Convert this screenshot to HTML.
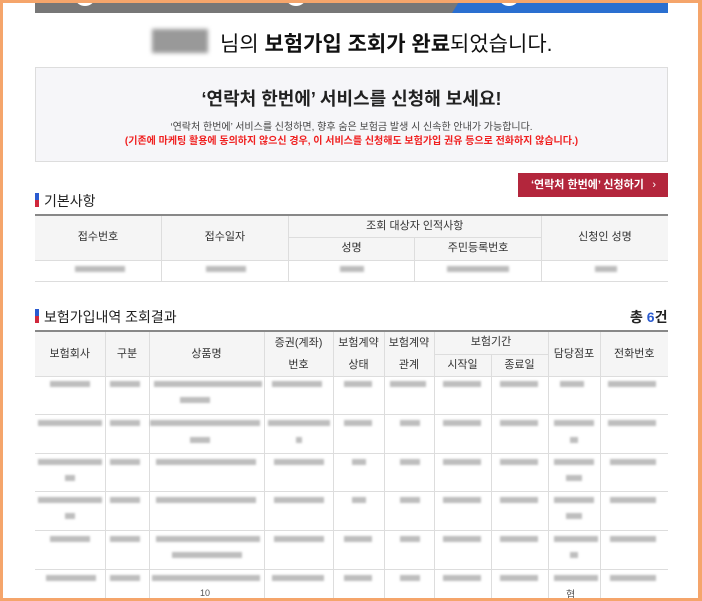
<!DOCTYPE html>
<html style="height:601px;overflow:hidden"><head><meta charset="utf-8"><style>
*{box-sizing:border-box;margin:0;padding:0}
body{width:702px;height:601px;overflow:hidden;background:#fff;font-family:"Liberation Sans","Noto Sans CJK KR",sans-serif;color:#222;position:relative}
.frame{position:absolute;left:0;top:0;width:702px;height:601px;border:3px solid #f5a56b;border-right-width:4px;z-index:10;pointer-events:none}
.abs{position:absolute}
.blur{position:absolute;background:#bbb;filter:blur(1.2px);height:6px}
table{border-collapse:collapse;position:absolute;left:35px;width:633px;table-layout:fixed}
td,th{font-weight:normal;font-size:11px;color:#333;text-align:center;border:1px solid #ddd;border-top:none;padding:0;line-height:13px}
th{background:#f5f5f5}
tr td:first-child,tr th:first-child{border-left:none}
tr td:last-child,tr th:last-child{border-right:none}
.tb{border-top:2px solid #888}
.bar{width:4px;height:14px;background:linear-gradient(#2a5bd0 50%,#d0283c 50%);display:inline-block;margin-right:5px;vertical-align:-1px}
</style></head><body>
<div class="frame"></div>
<div class="abs" style="left:35px;top:0;width:633px;height:13px;background:#777"></div>
<div class="abs" style="left:452px;top:0;width:216px;height:13px;background:#2a6fd0;clip-path:polygon(8px 0,100% 0,100% 100%,0 100%)"></div>
<div class="abs" style="left:76px;top:-8px;width:18px;height:14px;border-radius:50%;background:#fff"></div>
<div class="abs" style="left:287px;top:-8px;width:18px;height:14px;border-radius:50%;background:#fff"></div>
<div class="abs" style="left:500px;top:-8px;width:18px;height:14px;border-radius:50%;background:#fff"></div>
<div class="abs" style="left:152px;top:29px;width:56px;height:24px;background:#999;filter:blur(2px)"></div>
<div class="abs" style="left:220px;top:28px;font-size:21px;color:#111;white-space:nowrap">님의 <b>보험가입 조회가 완료</b>되었습니다.</div>
<div class="abs" style="left:35px;top:67px;width:633px;height:95px;background:#f6f6f9;border:1px solid #ddd"></div>
<div class="abs" style="left:35px;top:85px;width:633px;text-align:center;font-size:18px;font-weight:bold;color:#222">‘연락처 한번에’ 서비스를 신청해 보세요!</div>
<div class="abs" style="left:35px;top:118px;width:633px;text-align:center;font-size:10px;color:#444">‘연락처 한번에’ 서비스를 신청하면, 향후 숨은 보험금 발생 시 신속한 안내가 가능합니다.</div>
<div class="abs" style="left:35px;top:132px;width:633px;text-align:center;font-size:10px;color:#f02020;font-weight:bold">(기존에 마케팅 활용에 동의하지 않으신 경우, 이 서비스를 신청해도 보험가입 권유 등으로 전화하지 않습니다.)</div>
<div class="abs" style="left:518px;top:173px;width:150px;height:24px;background:#b3263c;color:#fff;font-size:11px;font-weight:bold;line-height:24px;padding-left:13px">‘연락처 한번에’ 신청하기<span style="position:absolute;right:12px;font-weight:normal">›</span></div>
<div class="abs" style="left:35px;top:191px;font-size:14px;color:#222"><span class="bar"></span>기본사항</div>
<table style="top:214px" class="tb">
<tr style="height:22px"><th rowspan="2">접수번호</th><th rowspan="2">접수일자</th><th colspan="2">조회 대상자 인적사항</th><th rowspan="2">신청인 성명</th></tr>
<tr style="height:23px"><th>성명</th><th>주민등록번호</th></tr>
<tr style="height:21px"><td></td><td></td><td></td><td></td><td></td></tr>
</table>
<div class="blur" style="left:75px;top:266px;width:50px"></div>
<div class="blur" style="left:206px;top:266px;width:40px"></div>
<div class="blur" style="left:340px;top:266px;width:24px"></div>
<div class="blur" style="left:447px;top:266px;width:62px"></div>
<div class="blur" style="left:595px;top:266px;width:22px"></div>
<div class="abs" style="left:35px;top:307px;font-size:14px;color:#222"><span class="bar"></span>보험가입내역 조회결과</div>
<div class="abs" style="left:630px;top:307px;font-size:14px;color:#222;font-weight:bold">총 <span style="color:#2a5bd0">6</span>건</div>
<table style="top:330px" class="tb">
<colgroup><col style="width:70px"><col style="width:44px"><col style="width:115px"><col style="width:69px"><col style="width:51px"><col style="width:50px"><col style="width:57px"><col style="width:57px"><col style="width:52px"><col style="width:68px"></colgroup>
<tr style="height:22px"><th rowspan="2">보험회사</th><th rowspan="2">구분</th><th rowspan="2">상품명</th><th rowspan="2" style="line-height:22px">증권(계좌)<br>번호</th><th rowspan="2" style="line-height:22px">보험계약<br>상태</th><th rowspan="2" style="line-height:22px">보험계약<br>관계</th><th colspan="2">보험기간</th><th rowspan="2">담당점포</th><th rowspan="2">전화번호</th></tr>
<tr style="height:21px"><th>시작일</th><th>종료일</th></tr>
<tr style="height:38px"><td></td><td></td><td></td><td></td><td></td><td></td><td></td><td></td><td></td><td></td></tr>
<tr style="height:39px"><td></td><td></td><td></td><td></td><td></td><td></td><td></td><td></td><td></td><td></td></tr>
<tr style="height:38px"><td></td><td></td><td></td><td></td><td></td><td></td><td></td><td></td><td></td><td></td></tr>
<tr style="height:39px"><td></td><td></td><td></td><td></td><td></td><td></td><td></td><td></td><td></td><td></td></tr>
<tr style="height:39px"><td></td><td></td><td></td><td></td><td></td><td></td><td></td><td></td><td></td><td></td></tr>
<tr style="height:30px"><td style="border-bottom:none"></td><td></td><td></td><td></td><td></td><td></td><td></td><td></td><td></td><td></td></tr>
</table>
<svg class="abs" style="left:0;top:375px;filter:blur(1px)" width="702" height="226">
<g fill="#bdbdbd">
<rect x="50" y="6" width="40" height="6"/><rect x="110" y="6" width="30" height="6"/><rect x="154" y="6" width="108" height="6"/><rect x="180" y="22" width="30" height="6"/><rect x="272" y="6" width="50" height="6"/><rect x="344" y="6" width="28" height="6"/><rect x="390" y="6" width="36" height="6"/><rect x="443" y="6" width="38" height="6"/><rect x="500" y="6" width="38" height="6"/><rect x="560" y="6" width="24" height="6"/><rect x="608" y="6" width="48" height="6"/>
<rect x="38" y="45" width="64" height="6"/><rect x="110" y="45" width="30" height="6"/><rect x="150" y="45" width="110" height="6"/><rect x="190" y="62" width="20" height="6"/><rect x="268" y="45" width="62" height="6"/><rect x="296" y="62" width="6" height="6"/><rect x="344" y="45" width="28" height="6"/><rect x="400" y="45" width="20" height="6"/><rect x="443" y="45" width="38" height="6"/><rect x="500" y="45" width="38" height="6"/><rect x="554" y="45" width="40" height="6"/><rect x="570" y="62" width="8" height="6"/><rect x="608" y="45" width="48" height="6"/>
<rect x="38" y="84" width="64" height="6"/><rect x="65" y="100" width="10" height="6"/><rect x="110" y="84" width="30" height="6"/><rect x="156" y="84" width="100" height="6"/><rect x="274" y="84" width="50" height="6"/><rect x="352" y="84" width="14" height="6"/><rect x="400" y="84" width="20" height="6"/><rect x="443" y="84" width="38" height="6"/><rect x="500" y="84" width="38" height="6"/><rect x="554" y="84" width="40" height="6"/><rect x="566" y="100" width="16" height="6"/><rect x="610" y="84" width="46" height="6"/>
<rect x="38" y="122" width="64" height="6"/><rect x="65" y="138" width="10" height="6"/><rect x="110" y="122" width="30" height="6"/><rect x="156" y="122" width="100" height="6"/><rect x="274" y="122" width="50" height="6"/><rect x="352" y="122" width="14" height="6"/><rect x="400" y="122" width="20" height="6"/><rect x="443" y="122" width="38" height="6"/><rect x="500" y="122" width="38" height="6"/><rect x="554" y="122" width="40" height="6"/><rect x="566" y="138" width="16" height="6"/><rect x="610" y="122" width="46" height="6"/>
<rect x="50" y="161" width="40" height="6"/><rect x="110" y="161" width="30" height="6"/><rect x="156" y="161" width="104" height="6"/><rect x="172" y="177" width="70" height="6"/><rect x="274" y="161" width="50" height="6"/><rect x="344" y="161" width="28" height="6"/><rect x="400" y="161" width="20" height="6"/><rect x="443" y="161" width="38" height="6"/><rect x="500" y="161" width="38" height="6"/><rect x="554" y="161" width="44" height="6"/><rect x="570" y="177" width="8" height="6"/><rect x="610" y="161" width="46" height="6"/>
<rect x="46" y="200" width="50" height="6"/><rect x="110" y="200" width="30" height="6"/><rect x="152" y="200" width="108" height="6"/><rect x="272" y="200" width="52" height="6"/><rect x="344" y="200" width="28" height="6"/><rect x="400" y="200" width="20" height="6"/><rect x="443" y="200" width="38" height="6"/><rect x="500" y="200" width="38" height="6"/><rect x="554" y="200" width="44" height="6"/><rect x="610" y="200" width="46" height="6"/>
</g></svg>
<div class="abs" style="left:200px;top:588px;font-size:9px;color:#555">10</div>
<div class="abs" style="left:566px;top:586px;font-size:10px;color:#555">협</div>
</body></html>
